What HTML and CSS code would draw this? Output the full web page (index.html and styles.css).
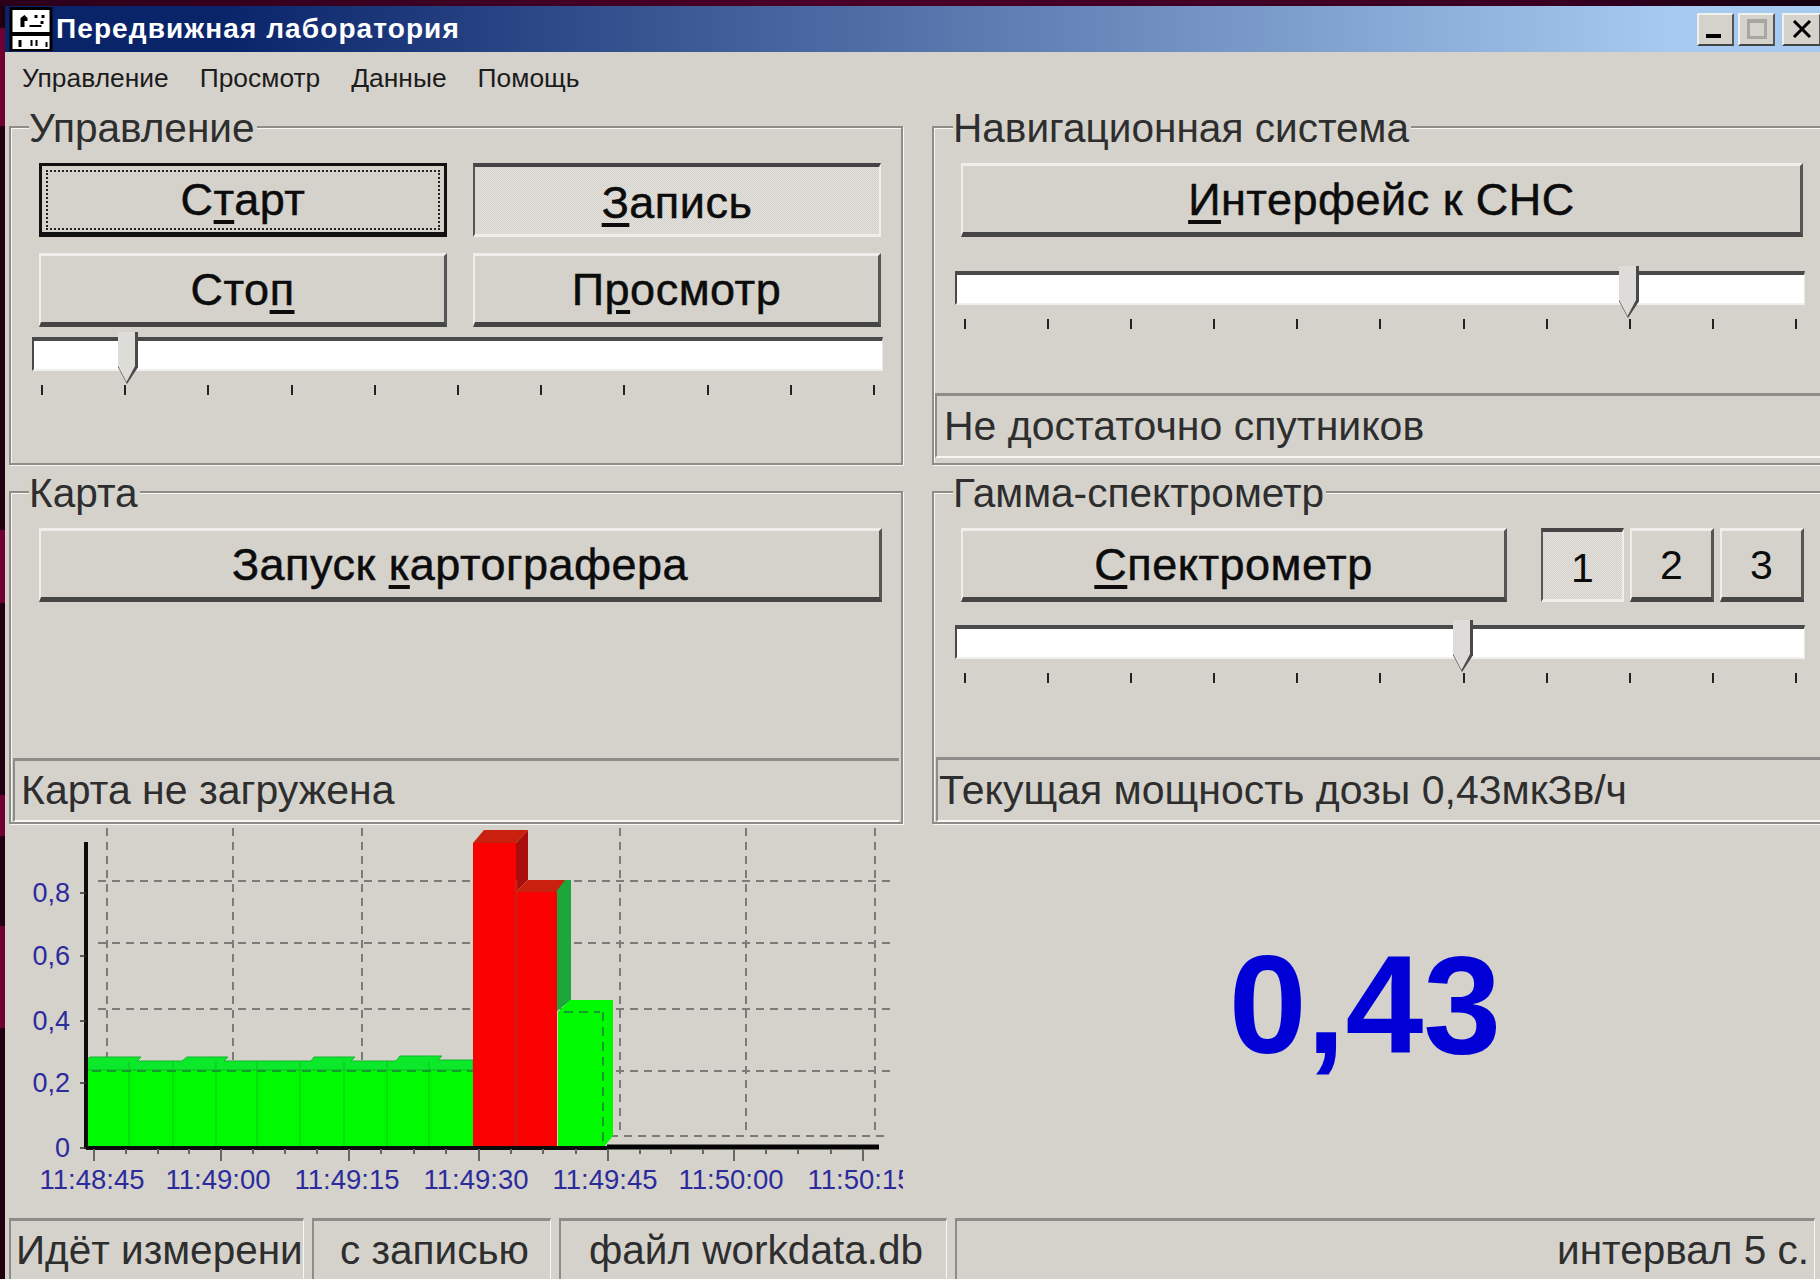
FILE: index.html
```html
<!DOCTYPE html>
<html lang="ru">
<head>
<meta charset="utf-8">
<title>Передвижная лаборатория</title>
<link rel="stylesheet" href="styles.css">
</head>
<body>
<div class="window">
  <header class="titlebar">
    <svg class="app-icon" viewBox="0 0 43 44" aria-hidden="true">
      <rect width="43" height="44" fill="#000"/>
      <rect x="3" y="3" width="37" height="22" fill="#fff"/>
      <rect x="3" y="29" width="37" height="13" fill="#fff"/>
      <path d="M11 20v-9l4-3 3 3v3h-3v6zM20 20h12v-2H20zM25 8h3v3h-3zM32 8h3v3h-3zM31 14h3v3h-3z" fill="#000"/>
      <path d="M9 33h3v7H9zM21 33h2v6h-2zM26 33h2v6h-2zM36 35h2v5h-2z" fill="#000"/>
    </svg>
    <span class="title-text">Передвижная лаборатория</span>
    <div class="caption-buttons">
      <span class="caption-btn caption-min"><i class="glyph-min"></i></span>
      <span class="caption-btn caption-max"><i class="glyph-max"></i></span>
      <span class="caption-btn caption-close">
        <svg class="glyph-close" viewBox="0 0 20 18" aria-hidden="true"><path d="M2 1l16 16M18 1L2 17" stroke="#000" stroke-width="3" fill="none"/></svg>
      </span>
    </div>
  </header>

  <nav class="menubar">
    <span class="menu-item menu-first">Управление</span>
    <span class="menu-item">Просмотр</span>
    <span class="menu-item">Данные</span>
    <span class="menu-item">Помощь</span>
  </nav>

  <main class="panels">
    <section class="group group-top">
      <span class="legend legend-left">Управление</span>
      <div class="button-grid">
        <button class="btn btn-default">С<u>т</u>арт</button>
        <button class="btn btn-latched"><u>З</u>апись</button>
        <button class="btn">Сто<u>п</u></button>
        <button class="btn">П<u>р</u>осмотр</button>
      </div>
      <div class="slider slider-left">
        <div class="track"><span class="thumb" style="left: 84px"></span></div>
        <div class="ticks"><i></i><i></i><i></i><i></i><i></i><i></i><i></i><i></i><i></i><i></i><i></i></div>
      </div>
    </section>

    <section class="group group-top group-right">
      <span class="legend legend-right">Навигационная система</span>
      <button class="btn btn-wide-right"><u>И</u>нтерфейс к СНС</button>
      <div class="slider slider-right slider-nav">
        <div class="track"><span class="thumb" style="left: 662px"></span></div>
        <div class="ticks"><i></i><i></i><i></i><i></i><i></i><i></i><i></i><i></i><i></i><i></i><i></i></div>
      </div>
      <div class="status status-nav">Не достаточно спутников</div>
    </section>

    <section class="group group-bottom">
      <span class="legend legend-left">Карта</span>
      <button class="btn btn-map">Запуск <u>к</u>артографера</button>
      <div class="status status-map">Карта не загружена</div>
    </section>

    <section class="group group-bottom group-right">
      <span class="legend legend-right">Гамма-спектрометр</span>
      <div class="spectro-row">
        <button class="btn btn-spectro"><u>С</u>пектрометр</button>
        <button class="btn btn-num btn-latched btn-num-first">1</button>
        <button class="btn btn-num">2</button>
        <button class="btn btn-num">3</button>
      </div>
      <div class="slider slider-right slider-gamma">
        <div class="track"><span class="thumb" style="left: 496px"></span></div>
        <div class="ticks"><i></i><i></i><i></i><i></i><i></i><i></i><i></i><i></i><i></i><i></i><i></i></div>
      </div>
      <div class="status status-gamma">Текущая мощность дозы 0,43мкЗв/ч</div>
    </section>
  </main>

  <div class="lower">
    <figure class="chart">
      <svg class="chart-svg" viewBox="10 826 893 374" aria-label="График мощности дозы">
        <!-- dashed grid -->
        <g class="grid">
          <path d="M98 881H890M98 943H890M98 1009H890M98 1071H890M610 1136H890"/>
          <path d="M107 828V1136M233 828V1136M362 828V1136M620 828V1136M746 828V1136M875 828V1136"/>
        </g>
        <!-- ordinary readings: stepped top faces, then the front -->
        <rect class="green-front" x="86" y="1066" width="387" height="82"/>
        <polygon class="green-top" points="86,1060 90,1057 141,1057 137,1061 182,1061 187,1057 228,1057 224,1061 311,1061 314,1057 355,1057 351,1061 396,1061 400,1056 442,1056 438,1060 473,1060 473,1070 86,1070"/>
        <path class="green-seams" d="M129 1062V1148M173 1062V1148M216 1062V1148M257 1062V1148M300 1062V1148M344 1062V1148M387 1062V1148M429 1062V1148"/>
        <path class="grid-through" d="M92 1071H473"/>
        <!-- high readings -->
        <polygon class="green-side" points="556,890 560,880 571,880 571,1000 556,1012"/>
        <polygon class="red-side" points="516,843 528,830 528,880 516,892"/>
        <polygon class="red-top" points="473,843 484,830 528,830 516,843"/>
        <polygon class="red-top" points="516,892 528,880 565,880 556,892"/>
        <rect class="red-front" x="473" y="843" width="43" height="305"/>
        <rect class="red-front" x="516" y="892" width="41" height="256"/>
        <path class="red-seam" d="M516 880V1148"/>
        <polygon class="green-front" points="558,1012 570,1000 613,1000 613,1136 603,1148 558,1148"/>
        <path class="grid-through" d="M564 1012H600M603 1012V1146"/>
        <!-- axes -->
        <path class="axis-thin" d="M86 842V1149M86 1148H607"/>
        <path class="axis-heavy" d="M607 1147H879"/>
        <path class="ticks-y" d="M80 893H86M80 956H86M80 1021H86M80 1083H86M80 1148H86"/>
        <path class="axis-ticks" d="M94 1149v12M126 1149v5M158 1149v5M189 1149v5M221 1149v12M253 1149v5M285 1149v5M317 1149v5M349 1149v12M381 1149v5M414 1149v5M446 1149v5M479 1149v12M511 1149v5M543 1149v5M576 1149v5M608 1149v12M640 1149v5M671 1149v5M703 1149v5M734 1149v12M766 1149v5M798 1149v5M831 1149v5M863 1149v12"/>
        <!-- axis labels -->
        <g class="labels-y">
          <text x="70" y="902">0,8</text>
          <text x="70" y="965">0,6</text>
          <text x="70" y="1030">0,4</text>
          <text x="70" y="1092">0,2</text>
          <text x="70" y="1157">0</text>
        </g>
        <g class="labels-x">
          <text x="92" y="1189">11:48:45</text>
          <text x="218" y="1189">11:49:00</text>
          <text x="347" y="1189">11:49:15</text>
          <text x="476" y="1189">11:49:30</text>
          <text x="605" y="1189">11:49:45</text>
          <text x="731" y="1189">11:50:00</text>
          <text x="860" y="1189">11:50:15</text>
        </g>
      </svg>
    </figure>
    <div class="reading">0,43</div>
  </div>

  <footer class="statusbar">
    <div class="cell cell-state">Идёт измерени</div>
    <div class="cell cell-mode">с записью</div>
    <div class="cell cell-file">файл workdata.db</div>
    <div class="cell cell-interval">интервал 5 с.</div>
  </footer>
</div>
</body>
</html>
```
FILE: styles.css
```css
* { box-sizing: border-box; }

html, body {
  margin: 0;
  height: 100%;
  overflow: hidden;
}

/* dark slide backdrop with maroon patches along the left edge */
body {
  background:
    linear-gradient(90deg, #2c001a 0, #4a0028 45%, #3a0022 85%, #120010 100%) 0 0 / 100% 6px no-repeat,
    linear-gradient(180deg,
      #20000f 0 28px, #700034 28px 126px, #20000f 126px 530px, #700034 530px 603px,
      #20000f 603px 795px, #700034 795px 836px, #20000f 836px 926px, #700034 926px 1028px,
      #20000f 1028px);
  font-family: "Liberation Sans", Arial, sans-serif;
  color: #2e2e2e;
}

.window {
  margin: 6px 0 0 5px;
  height: 1273px;
  background: #d5d2cc;
  display: flex;
  flex-direction: column;
  overflow: hidden;
}

/* title bar */
.titlebar {
  height: 46px;
  flex: none;
  display: flex;
  align-items: center;
  padding-left: 4px;
  background: linear-gradient(90deg, #0a246a 0, #0a246a 12%, #a6caf0 92%, #a6caf0 100%);
}

.app-icon {
  width: 44px;
  height: 44px;
  flex: none;
}

.title-text {
  margin-left: 3px;
  color: #fff;
  font-weight: 700;
  font-size: 28px;
  letter-spacing: 1.1px;
  white-space: nowrap;
}

.caption-buttons {
  margin-left: auto;
  display: flex;
  gap: 4px;
}

.caption-btn {
  width: 37px;
  height: 33px;
  background: #d5d2cc;
  border: 2px solid;
  border-color: #f0f0ee #555 #444 #f0f0ee;
  display: flex;
  align-items: center;
  justify-content: center;
}

.caption-close { width: 39px; margin-left: 3px; margin-right: -1px; }

.glyph-min {
  width: 15px;
  height: 4px;
  background: #000;
  margin-top: 14px;
  margin-right: 4px;
}

.glyph-max {
  width: 20px;
  height: 20px;
  border: 3px solid #a8a6a2;
  border-top-width: 4px;
}

.glyph-close { width: 20px; height: 18px; }

/* menu */
.menubar {
  height: 48px;
  flex: none;
  display: flex;
  align-items: center;
  padding: 4px 0 0 17px;
  font-size: 26.4px;
  color: #1c1c1c;
}

.menu-item { white-space: nowrap; margin-right: 31px; }

/* group boxes */
.panels {
  margin-top: 26px;
  padding-left: 4px;
  display: grid;
  grid-template-columns: 894px 902px;
  grid-template-rows: 339px 333px;
  column-gap: 29px;
  row-gap: 26px;
  flex: none;
}

.group {
  position: relative;
  display: flex;
  flex-direction: column;
  border: 2px solid #8e8c88;
  box-shadow: inset 1px 1px 0 #f6f6f4, 1px 1px 0 #f6f6f4;
  padding-top: 35px;
}

.legend {
  position: absolute;
  top: -23px;
  background: #d5d2cc;
  font-size: 40.6px;
  line-height: 46px;
  white-space: nowrap;
}

.legend-left { left: 18px; padding-right: 2px; }
.legend-right { left: 19px; padding-right: 2px; }

/* buttons */
.btn {
  appearance: none;
  font-family: inherit;
  font-size: 45px;
  letter-spacing: 0.5px;
  color: #0c0c0c;
  -webkit-text-stroke: 0.5px #0c0c0c;
  background: #d5d2cc;
  border: solid;
  border-width: 3px 3px 5px 2px;
  border-color: #efeeeb #555 #454545 #efeeeb;
  padding: 2px 0 0;
  height: 74px;
  white-space: nowrap;
}

.btn u { text-underline-offset: 5px; }

.btn-default {
  border: 3px solid #111;
  border-bottom-width: 5px;
  outline: 2px dotted #222;
  outline-offset: -9px;
}

.btn-latched {
  padding-top: 5px;
  border-width: 4px 2px 3px 2px;
  border-color: #454545 #efeeeb #efeeeb #555;
  background-image: conic-gradient(#e3e1dd 25%, #d5d2cc 0 50%, #e3e1dd 0 75%, #d5d2cc 0);
  background-size: 2px 2px;
}

.button-grid {
  margin-left: 28px;
  width: 842px;
  display: grid;
  grid-template-columns: 408px 408px;
  column-gap: 26px;
  row-gap: 16px;
}

.btn-wide-right { margin-left: 27px; width: 842px; }
.btn-map { margin-left: 28px; width: 843px; }

.spectro-row {
  margin-left: 27px;
  display: flex;
  gap: 6px;
}

.btn-spectro { width: 546px; margin-right: 28px; }
.btn-num { width: 84px; font-size: 41px; letter-spacing: 0; -webkit-text-stroke: 0; }
.btn-num-first { width: 83px; }

/* track bars */
.slider { position: relative; }

.track {
  position: relative;
  height: 34px;
  background: #fff;
  border: solid;
  border-width: 4px 1px 2px 2px;
  border-color: #4a4a4a #e8e8e6 #efefed #4a4a4a;
}

.thumb {
  position: absolute;
  top: -9px;
  width: 20px;
  height: 52px;
  background: #4a4a4a;
  clip-path: polygon(0 0, 100% 0, 100% 68%, 45% 100%, 0 68%);
}

.thumb::after {
  content: "";
  position: absolute;
  inset: 0 3px 2px 0;
  background: #dedcd8;
  clip-path: polygon(0 0, 100% 0, 100% 68%, 50% 100%, 0 68%);
}

.ticks {
  display: flex;
  justify-content: space-between;
  margin-top: 14px;
  padding: 0 9px;
}

.ticks i {
  width: 2px;
  height: 10px;
  background: #222;
}

.slider-left { margin: 10px 20px 0 21px; width: 851px; }
.slider-left .ticks { padding-right: 8px; }
.slider-right { margin-left: 21px; width: 850px; }
.slider-right .ticks { padding-right: 8px; }
.slider-nav { margin-top: 34px; }
.slider-gamma { margin-top: 23px; }

/* sunken status lines */
.status {
  margin-top: auto;
  border-top: 3px solid #8e8c88;
  border-left: 2px solid #8e8c88;
  border-bottom: 2px solid #f6f6f4;
  font-size: 41px;
  white-space: nowrap;
  display: flex;
  align-items: center;
}

.status-nav { height: 65px; margin-left: 1px; margin-bottom: 5px; padding-left: 7px; }
.status-map { height: 64px; margin: auto 2px 0 2px; padding-left: 6px; }
.status-gamma { height: 65px; margin-left: 2px; padding-left: 1px; }

/* lower area */
.lower {
  margin-top: 2px;
  padding-left: 5px;
  display: flex;
  flex: none;
}

.chart {
  margin: 0;
  width: 893px;
  height: 374px;
  flex: none;
}

.chart-svg { display: block; width: 893px; height: 374px; }

.grid { fill: none; stroke: #7d7b78; stroke-width: 2; stroke-dasharray: 8 6; }
.grid-through { fill: none; stroke: #129c2a; stroke-width: 2; stroke-dasharray: 9 6; }
.green-top { fill: #0ce82a; stroke: #12b52c; stroke-width: 1; }
.green-front { fill: #00fa00; }
.green-seams { fill: none; stroke: #0cc41c; stroke-width: 1; }
.green-side { fill: #1da63c; }
.red-side { fill: #a90d0d; }
.red-top { fill: #c9200f; }
.red-front { fill: #fb0000; }
.red-seam { fill: none; stroke: #d01a12; stroke-width: 3; }
.axis-thin { fill: none; stroke: #0b0b0b; stroke-width: 4; }
.ticks-y { fill: none; stroke: #333; stroke-width: 1.5; }
.axis-heavy { fill: none; stroke: #050505; stroke-width: 5; }
.axis-ticks { fill: none; stroke: #666; stroke-width: 2; }

.labels-y text, .labels-x text {
  fill: #2b2b9c;
  font-family: "Liberation Sans", Arial, sans-serif;
}

.labels-y text { text-anchor: end; font-size: 27px; }
.labels-x text { text-anchor: middle; font-size: 27.5px; }

.reading {
  flex: none;
  width: 924px;
  padding-bottom: 16px;
  display: flex;
  align-items: center;
  justify-content: center;
  font-size: 140px;
  font-weight: 700;
  color: #0000d6;
}

/* status bar */
.statusbar {
  margin-top: 18px;
  height: 61px;
  flex: none;
  display: flex;
  padding-left: 4px;
  gap: 8px;
  font-size: 40.5px;
}

.cell {
  border-top: 3px solid #8e8c88;
  border-left: 2px solid #8e8c88;
  border-right: 1px solid #f6f6f4;
  white-space: nowrap;
  overflow: hidden;
  display: flex;
  align-items: center;
  flex: none;
}

.cell-state { width: 295px; padding-left: 5px; }
.cell-mode { width: 239px; padding-left: 26px; }
.cell-file { width: 388px; padding-left: 28px; }
.cell-interval { width: 860px; justify-content: flex-end; padding-right: 5px; }
```
